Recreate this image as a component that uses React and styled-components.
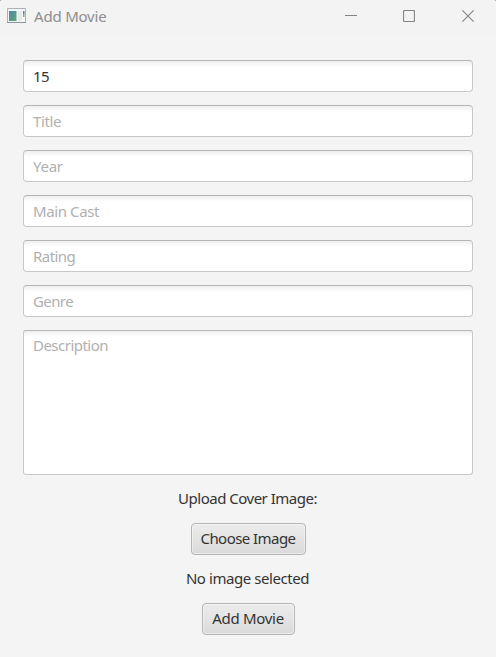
import React from "react";
import styled, { createGlobalStyle } from "styled-components";

const GlobalStyle = createGlobalStyle`
  * { box-sizing: border-box; }
  body {
    margin: 0;
    background: #5a5a55;
    font-family: "Noto Sans", "Open Sans", sans-serif;
    font-size: 15px;
    color: #333;
  }
`;

const Window = styled.main`
  width: 496px;
  height: 657px;
  display: flex;
  flex-direction: column;
  background: #f4f4f4;
  border-radius: 2px 2px 0 0;
  overflow: hidden;
`;

const TitleBar = styled.header`
  height: 36px;
  flex: none;
  display: flex;
  align-items: flex-start;
  padding-left: 7px;
  background: #f3f3f3;
`;

const AppIcon = styled.svg`
  width: 19px;
  height: 16px;
  margin-top: 8px;
  flex: none;
`;

const WindowTitle = styled.h1`
  margin: 5px 0 0 8px;
  flex: 1;
  font-size: 15px;
  font-weight: 400;
  line-height: 22px;
  color: #8e8e8e;
`;

const Fit = styled.span`
  letter-spacing: ${(p) => p.$spacing || 0}px;
  white-space: nowrap;
`;

const Controls = styled.div`
  display: flex;
`;

const ControlButton = styled.button`
  width: 58px;
  height: 32px;
  padding: 0;
  border: 0;
  background: none;
  color: #858585;
  svg { display: block; margin: 0 auto; }
`;

const CloseButton = styled(ControlButton)`
  padding-left: 2px;
`;

const Form = styled.form`
  display: flex;
  flex-direction: column;
  align-items: center;
  gap: 13px;
  padding: 24px 23px 0;
`;

const Field = styled.input`
  width: 100%;
  height: 32px;
  padding: 0 9px;
  border: 1px solid #c8c8c8;
  border-top-color: #b5b5b5;
  border-radius: 4px;
  outline: 0;
  background: linear-gradient(#efefef, #fff 6px);
  font: inherit;
  letter-spacing: ${(p) => p.$spacing || 0}px;
  color: #333;
  &::placeholder { color: #b0b0b0; opacity: 1; }
`;

const Description = styled.textarea`
  display: block;
  width: 100%;
  height: 145px;
  padding: 3px 9px;
  border: 1px solid #c8c8c8;
  border-top-color: #b5b5b5;
  border-radius: 3px;
  outline: 0;
  resize: none;
  background: linear-gradient(#efefef, #fff 6px);
  font: inherit;
  line-height: 22px;
  letter-spacing: ${(p) => p.$spacing || 0}px;
  &::placeholder { color: #b0b0b0; opacity: 1; }
`;

const Caption = styled.div`
  height: 22px;
  padding-right: 1px;
  line-height: 20px;
`;

const PushButton = styled.button`
  width: ${(p) => p.$width}px;
  height: 32px;
  padding: 0 0 2px;
  border: 1px solid #b5b5b5;
  border-radius: 4px;
  background: linear-gradient(#ececec, #dadada);
  box-shadow: inset 0 0 0 1px rgba(255, 255, 255, 0.45);
  font: inherit;
  line-height: 22px;
  color: #333;
`;

const fields = [
  { name: "Title", spacing: -0.4 },
  { name: "Year", spacing: -0.25 },
  { name: "Main Cast", spacing: -0.4 },
  { name: "Rating", spacing: -0.55 },
  { name: "Genre", spacing: -0.6 },
];

export default function App() {
  return (
    <>
      <GlobalStyle />
      <Window>
        <TitleBar>
          <AppIcon viewBox="0 0 19 16">
            <defs>
              <linearGradient id="pane" x1="0" y1="0" x2="1" y2="1">
                <stop offset="0" stopColor="#4b87ab" />
                <stop offset="1" stopColor="#61aa75" />
              </linearGradient>
            </defs>
            <path d="M0.5 0.5H18.5V14.5H0.5Z" fill="#f5f6f7" stroke="#abb1b8" />
            <path d="M0 14.5H19" stroke="#8b939d" />
            <path d="M2 3H9.5V13H2Z" fill="url(#pane)" />
            <path d="M11 3H15V13H11Z" fill="#e7e9ea" />
            <path d="M16 3H17.5V6H16Z" fill="#5287a9" />
            <path d="M16 6H17.5V9H16Z" fill="#71b17e" />
          </AppIcon>
          <WindowTitle><Fit $spacing={-0.2}>Add Movie</Fit></WindowTitle>
          <Controls>
            <ControlButton aria-label="Minimize">
              <svg width="12" height="12" viewBox="0 0 12 12">
                <path d="M0 5.5H12" stroke="currentColor" />
              </svg>
            </ControlButton>
            <ControlButton aria-label="Maximize">
              <svg width="12" height="12" viewBox="0 0 12 12">
                <rect x="0.5" y="0.5" width="11" height="11" rx="1" fill="none" stroke="currentColor" strokeWidth="1.2" />
              </svg>
            </ControlButton>
            <CloseButton aria-label="Close">
              <svg width="12" height="12" viewBox="0 0 12 12">
                <path d="M0.3 0.3L11.7 11.7M11.7 0.3L0.3 11.7" stroke="currentColor" strokeWidth="1.1" />
              </svg>
            </CloseButton>
          </Controls>
        </TitleBar>
        <Form onSubmit={(e) => e.preventDefault()}>
          <Field defaultValue="15" $spacing={-0.6} />
          {fields.map((f) => (
            <Field key={f.name} placeholder={f.name} $spacing={f.spacing} />
          ))}
          <Description placeholder="Description" $spacing={-0.52} />
          <Caption><Fit $spacing={-0.5}>Upload Cover Image:</Fit></Caption>
          <PushButton type="button" $width={115}><Fit $spacing={-0.55}>Choose Image</Fit></PushButton>
          <Caption><Fit $spacing={-0.43}>No image selected</Fit></Caption>
          <PushButton $width={93}><Fit $spacing={-0.28}>Add Movie</Fit></PushButton>
        </Form>
      </Window>
    </>
  );
}
